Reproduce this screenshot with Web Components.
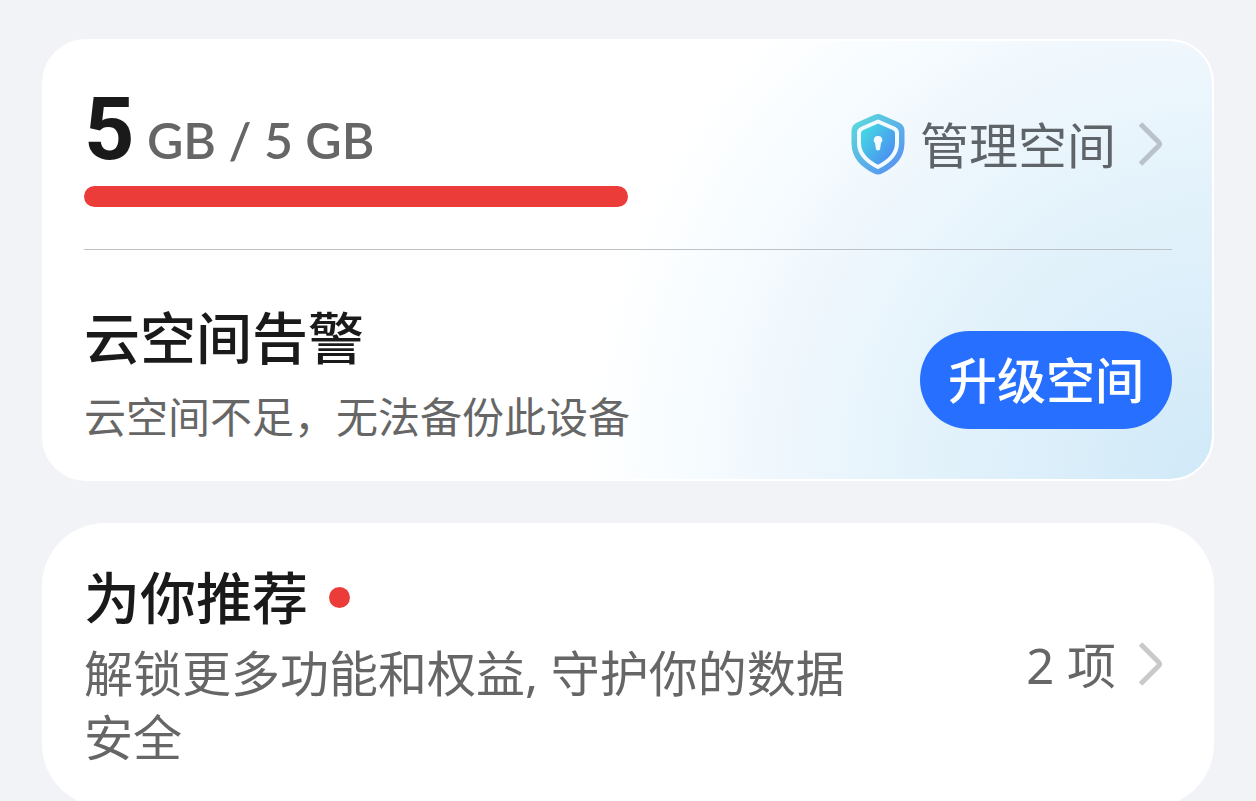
<!DOCTYPE html>
<html lang="zh-CN">
<head>
<meta charset="utf-8">
<title>云空间</title>
<style>
  html {
    scrollbar-width: none;
  }
  body {
    margin: 0;
    padding: 39px 42px 0;
    background: #f1f3f7;
    color: #1a1a1a;
    font-family: "Noto Sans", "Noto Sans CJK SC", sans-serif;
  }
</style>
</head>
<body>
<cloud-page></cloud-page>

<template id="chevron-icon">
  <style>
    :host {
      display: block;
      flex: none;
      color: #c9c9c9;
    }
    svg {
      display: block;
    }
  </style>
  <svg width="36" height="48" viewBox="0 0 36 48" fill="none" stroke="currentColor" stroke-width="5" stroke-linejoin="round" aria-hidden="true">
    <path d="M4.500 3L22.500 21Q24.500 23 22.500 25L4.500 43"/>
  </svg>
</template>

<template id="shield-icon">
  <style>
    :host {
      display: block;
      flex: none;
    }
    svg {
      display: block;
    }
  </style>
  <svg width="64" height="64" viewBox="0 0 64 64" aria-hidden="true">
    <defs>
      <linearGradient id="fill" x1="0.1" y1="0.1" x2="0.8" y2="0.9">
        <stop offset="0" stop-color="#5cd6dd"/>
        <stop offset="1" stop-color="#5896f0"/>
      </linearGradient>
      <linearGradient id="core" x1="0.1" y1="0.1" x2="0.9" y2="0.8">
        <stop offset="0" stop-color="#45dbe2"/>
        <stop offset="1" stop-color="#4b8df2"/>
      </linearGradient>
    </defs>
    <path fill="url(#fill)" d="M32 1Q34 1 36 2L53 9.500Q58.500 12 58.500 18V30C58.500 45 49 54 36 60.500Q32 62.500 28 60.500C15 54 5.500 45 5.500 30V18Q5.500 12 11 9.500L28 2Q30 1 32 1Z"/>
    <path fill="url(#core)" stroke="#f4fbff" stroke-width="4" stroke-linejoin="round" d="M32 8.500L48 15.500Q51 17 51 20V30C51 41 44 48 32 54C20 48 13 41 13 30V20Q13 17 16 15.500Z"/>
    <path fill="#f4fbff" d="M32 23a4 4 0 0 1 3 7l-1 6.500q-2 2-4 0l-1-6.500a4 4 0 0 1 3-7z"/>
  </svg>
</template>

<template id="space-card">
  <style>
    :host {
      display: block;
      box-sizing: border-box;
      padding: 0 40px;
      border: 2px solid #fff;
      border-radius: 44px;
      background:
        radial-gradient(ellipse 54% 145% at 100% 100%, #d0e9f8 0%, #dbeefa 25%, #e4f3fb 48%, #eff7fd 68%, #f9fdff 88%, #fff 100%) padding-box,
        #fff;
    }
    .usage, .alert {
      display: flex;
      align-items: center;
      justify-content: space-between;
    }
    .usage {
      border-bottom: 1px solid #bdc2c7;
    }
    .used {
      flex: 0 0 50%;
      padding: 42px 0;
    }
    .alert {
      padding: 54px 0 23px;
    }
  </style>
  <div class="usage">
    <div class="used"><slot name="usage"></slot></div>
    <slot name="manage"></slot>
  </div>
  <div class="alert">
    <slot></slot>
    <slot name="action"></slot>
  </div>
</template>

<template id="usage-meter">
  <style>
    :host {
      display: block;
    }
    .amount {
      margin: 0;
      color: #666;
      font: 600 50px/92px Lato, sans-serif;
      white-space: pre;
    }
    strong {
      color: #1a1a1a;
      font-family: Roboto, sans-serif;
      font-size: 88px;
      font-weight: 700;
    }
    .bar {
      height: 21px;
      border-radius: 11px;
      background: #ec3c39;
    }
  </style>
  <p class="amount"><strong></strong> <span></span></p>
  <div class="bar" role="progressbar" aria-label="云空间" aria-valuemin="0"></div>
</template>

<template id="text-block">
  <style>
    :host {
      display: block;
    }
    h2 {
      display: flex;
      align-items: center;
      gap: 21px;
      margin: 0 0 8px;
      font-size: 56px;
      font-weight: 500;
      line-height: var(--title-line, 66px);
    }
    :host([dot]) h2::after {
      content: "";
      width: 21px;
      height: 21px;
      border-radius: 50%;
      background: #ec3c39;
    }
    p {
      margin: 0;
      color: #666;
      font-size: var(--note-size, 42px);
      line-height: var(--note-line, 78px);
    }
  </style>
  <h2><slot name="title"></slot></h2>
  <p><slot></slot></p>
</template>

<template id="more-link">
  <style>
    :host {
      display: block;
      flex: none;
    }
    a {
      display: flex;
      align-items: center;
      color: var(--link, #666);
      font-size: 49px;
      line-height: 64px;
      text-decoration: none;
    }
    chevron-icon {
      margin-left: 20px;
      color: var(--chevron, #c9c9c9);
    }
  </style>
  <a href="#"><slot name="icon"></slot><slot></slot><chevron-icon></chevron-icon></a>
</template>

<template id="pill-button">
  <style>
    :host {
      display: block;
      flex: none;
    }
    button {
      padding: 13px 28px;
      border: 0;
      border-radius: 49px;
      background: #276fff;
      color: #fff;
      font: inherit;
      font-size: 49px;
      font-weight: 500;
      line-height: 72px;
    }
  </style>
  <button type="button"><slot></slot></button>
</template>

<template id="tip-card">
  <style>
    :host {
      display: flex;
      align-items: center;
      justify-content: space-between;
      padding: 38px 42px;
      border-radius: 63px;
      background: #fff;
    }
    ::slotted(text-block) {
      flex: 0 1 72%;
    }
  </style>
  <slot></slot>
  <slot name="more"></slot>
</template>

<template id="cloud-page">
  <style>
    :host {
      display: flex;
      flex-direction: column;
      gap: 42px;
    }
    shield-icon {
      margin-right: 10px;
    }
    .manage {
      --link: #5f6468;
      --chevron: #b9c2ca;
    }
    .tips {
      --title-line: 72px;
      --note-size: 49px;
      --note-line: 64px;
    }
  </style>
  <space-card>
    <usage-meter slot="usage" used="5" total="5"></usage-meter>
    <more-link slot="manage" class="manage"><shield-icon slot="icon"></shield-icon>管理空间</more-link>
    <text-block><span slot="title">云空间告警</span>云空间不足，无法备份此设备</text-block>
    <pill-button slot="action">升级空间</pill-button>
  </space-card>
  <tip-card>
    <text-block class="tips" dot><span slot="title">为你推荐</span>解锁更多功能和权益, 守护你的数据安全</text-block>
    <more-link slot="more">2 项</more-link>
  </tip-card>
</template>

<script>
class BaseElement extends HTMLElement {
  constructor() {
    super();
    const template = document.getElementById(this.localName);
    this.attachShadow({ mode: "open" }).appendChild(template.content.cloneNode(true));
  }
}

class UsageMeter extends BaseElement {
  connectedCallback() {
    const used = this.getAttribute("used");
    const total = this.getAttribute("total");
    const bar = this.shadowRoot.querySelector(".bar");
    this.shadowRoot.querySelector("strong").textContent = used;
    this.shadowRoot.querySelector("span").textContent = `GB / ${total} GB`;
    bar.setAttribute("aria-valuenow", used);
    bar.setAttribute("aria-valuemax", total);
  }
}

customElements.define("chevron-icon", class extends BaseElement {});
customElements.define("shield-icon", class extends BaseElement {});
customElements.define("usage-meter", UsageMeter);
customElements.define("text-block", class extends BaseElement {});
customElements.define("more-link", class extends BaseElement {});
customElements.define("pill-button", class extends BaseElement {});
customElements.define("space-card", class extends BaseElement {});
customElements.define("tip-card", class extends BaseElement {});
customElements.define("cloud-page", class extends BaseElement {});
</script>
</body>
</html>
